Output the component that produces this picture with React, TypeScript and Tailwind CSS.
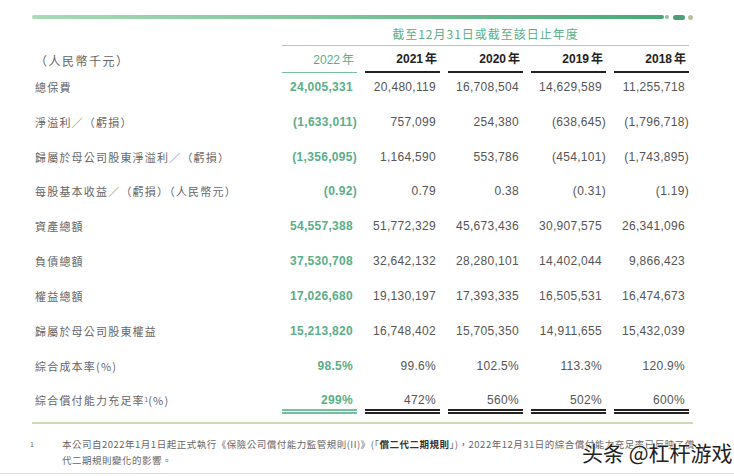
import React from "react";

const rows: string[][] = [
  ["總保費", "24,005,331", "20,480,119", "16,708,504", "14,629,589", "11,255,718"],
  ["淨溢利／（虧損）", "(1,633,011)", "757,099", "254,380", "(638,645)", "(1,796,718)"],
  ["歸屬於母公司股東淨溢利／（虧損）", "(1,356,095)", "1,164,590", "553,786", "(454,101)", "(1,743,895)"],
  ["每股基本收益／（虧損）（人民幣元）", "(0.92)", "0.79", "0.38", "(0.31)", "(1.19)"],
  ["資產總額", "54,557,388", "51,772,329", "45,673,436", "30,907,575", "26,341,096"],
  ["負債總額", "37,530,708", "32,642,132", "28,280,101", "14,402,044", "9,866,423"],
  ["權益總額", "17,026,680", "19,130,197", "17,393,335", "16,505,531", "16,474,673"],
  ["歸屬於母公司股東權益", "15,213,820", "16,748,402", "15,705,350", "14,911,655", "15,432,039"],
  ["綜合成本率(%)", "98.5%", "99.6%", "102.5%", "113.3%", "120.9%"],
];

const last = ["299%", "472%", "560%", "502%", "600%"];
const years = ["2022", "2021", "2020", "2019", "2018"];

const num = "font-['Liberation_Sans','Noto_Sans_CJK_TC',sans-serif]";
const cjk = "font-['Noto_Sans_CJK_TC','Liberation_Sans',sans-serif]";
const grid = "grid grid-cols-[239px_repeat(5,75px)] gap-x-2 pl-[35px]";

function Value({ v, first }: { v: string; first: boolean }) {
  const hang = v.endsWith(")");
  return (
    <div className={`flex justify-end pr-[4px] text-[12px] tracking-[0.3px] ${num} ${first ? "text-[#5aae88] font-semibold" : "text-[#555]"}`}>
      <span className={hang ? "mr-[-4px]" : ""}>{v}</span>
    </div>
  );
}

export default function App() {
  return (
    <div className="w-[734px] h-[476px] bg-white relative overflow-hidden">
      {/* top bar */}
      <div className="flex items-center pt-[15px] pl-[32px] h-[19px]">
        <div className="w-[632px] h-[4px] rounded-full bg-gradient-to-r from-[#a9d9b8] via-[#7cc49b] to-[#47a878]" />
        <div className="w-[4px] h-[4px] rounded-full bg-[#8fbf9f] ml-[1px]" />
        <div className="w-[12px] h-[5px] rounded-full bg-[#4e9f77] ml-[4px]" />
        <div className="w-[5px] h-[5px] rounded-full bg-[#b7c49a] ml-[3px]" />
      </div>

      {/* title */}
      <div className={grid}>
        <div />
        <div className="col-span-5 h-[27px] pt-[4px] flex items-center justify-center border-b-[1.5px] border-[#9fcfb4]">
          <span className={`text-[12px] tracking-[1px] text-[#5aae88] ${cjk}`}>截至12月31日或截至該日止年度</span>
        </div>
      </div>

      {/* years */}
      <div className={grid}>
        <div className={`h-[26.5px] flex items-end pb-[3px] text-[12px] tracking-[1.5px] text-[#666] ${cjk}`}>（人民幣千元）</div>
        {years.map((y, i) => (
          <div
            key={y}
            className={`h-[26.5px] flex items-end justify-end pb-[3px] pr-[3px] text-[12px] ${num} ${
              i === 0 ? "border-b-[1.5px] border-[#74c29d] text-[#5aae88]" : "border-b-[2px] border-[#222] text-[#222] font-bold"
            }`}
          >
            {y}
            <span className="ml-[2px]">年</span>
          </div>
        ))}
      </div>

      {/* body */}
      {rows.map((r) => (
        <div key={r[0]} className={`${grid} h-[34.83px] items-start pt-[7.5px]`}>
          <div className={`text-[11px] leading-[14px] tracking-[1.2px] text-[#666] ${cjk}`}>{r[0]}</div>
          {r.slice(1).map((v, i) => (
            <div key={i} className="leading-[14px]">
              <Value v={v} first={i === 0} />
            </div>
          ))}
        </div>
      ))}
      <div className={`${grid} h-[28px]`}>
        <div className={`pt-[7.5px] text-[11px] leading-[14px] tracking-[1.2px] text-[#666] ${cjk}`}>
          綜合償付能力充足率<sup className="text-[6px] tracking-normal">1</sup>(%)
        </div>
        {last.map((v, i) => (
          <div
            key={v}
            className={`pt-[7.5px] leading-[14px] border-b-[5px] border-double ${i === 0 ? "border-[#74c29d]" : "border-[#222]"}`}
          >
            <Value v={v} first={i === 0} />
          </div>
        ))}
      </div>

      {/* footnote */}
      <div className="ml-[32px] mt-[8px] w-[661px] h-[2px] bg-[#cbd8b2]" />
      <div className={`flex pl-[30px] pt-[12px] text-[9.5px] leading-[16px] text-[#666] ${cjk}`}>
        <span className="w-[32px] text-[7px]">1</span>
        <div className="tracking-[0.5px]">
          <div className="whitespace-nowrap">
            本公司自2022年1月1日起正式執行《保險公司償付能力監管規則(II)》(「<b className="text-[#333]">償二代二期規則</b>」)，2022年12月31日的綜合償付能力充足率已反映了償
          </div>
          <div>代二期規則變化的影響。</div>
        </div>
      </div>
      <div className="absolute left-0 top-[473px] w-full h-[1px] bg-[#dcdcdc]" />

      {/* watermark */}
      <div
        className={`absolute left-[582px] top-[439px] text-[21px] leading-[26px] text-[#222] whitespace-nowrap [text-shadow:0_0_2px_#fff,0_0_2px_#fff,0_0_1px_#fff] font-['Noto_Sans_CJK_SC',sans-serif]`}
      >
        头条 @杠杆游戏
      </div>
    </div>
  );
}
